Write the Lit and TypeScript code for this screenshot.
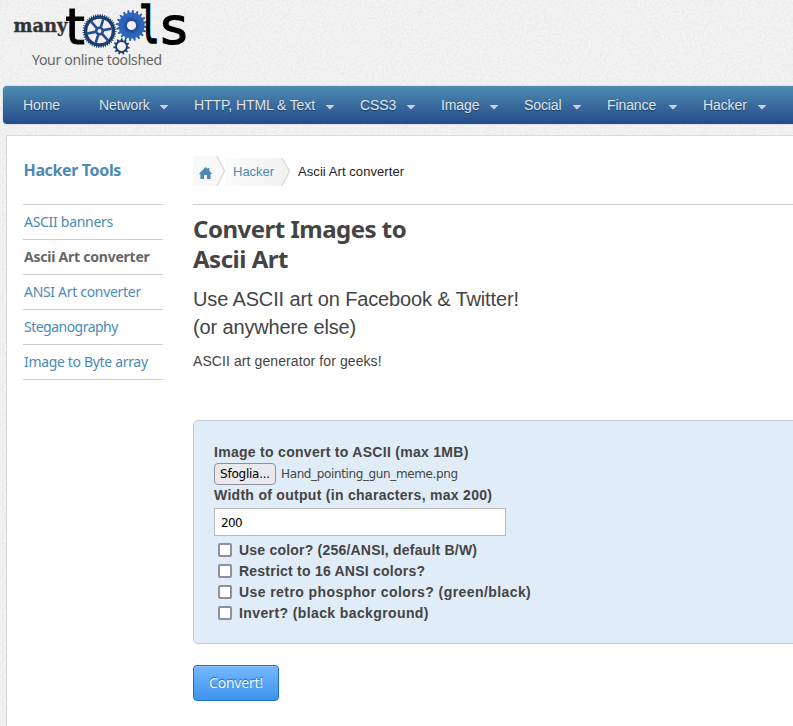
import { LitElement, html, css, svg } from "lit";
import { customElement } from "lit/decorators.js";

const NAV = [
  { label: "Home", width: 76, menu: false },
  { label: "Network", width: 95, menu: true },
  { label: "HTTP, HTML & Text", width: 166, menu: true },
  { label: "CSS3", width: 81, menu: true },
  { label: "Image", width: 83, menu: true },
  { label: "Social", width: 83, menu: true },
  { label: "Finance", width: 96, menu: true },
  { label: "Hacker", width: 89, menu: true },
];

const TOOLS = [
  { label: "ASCII banners", tracking: -0.29 },
  { label: "Ascii Art converter", tracking: -0.23 },
  { label: "ANSI Art converter", tracking: -0.31 },
  { label: "Steganography", tracking: -0.52 },
  { label: "Image to Byte array", tracking: -0.33 },
];

const OPTIONS = [
  { label: "Use color? (256/ANSI, default B/W)", tracking: 0.21 },
  { label: "Restrict to 16 ANSI colors?", tracking: 0.23 },
  { label: "Use retro phosphor colors? (green/black)", tracking: 0.42 },
  { label: "Invert? (black background)", tracking: 0.39 },
];

function gear(cx: number, cy: number, root: number, tip: number, teeth: number): string {
  const pts: string[] = [];
  const step = (Math.PI * 2) / teeth;
  const at = (r: number, a: number) => `${(cx + r * Math.cos(a)).toFixed(2)} ${(cy + r * Math.sin(a)).toFixed(2)}`;
  for (let i = 0; i < teeth; i++) {
    const a = i * step;
    pts.push(at(root, a), at(tip, a + step * 0.15), at(tip, a + step * 0.45), at(root, a + step * 0.6));
  }
  return `M${pts.join("L")}Z`;
}

@customElement("site-logo")
export class SiteLogo extends LitElement {
  static styles = css`
    :host { display: block; height: 86px; }
    svg { display: block; overflow: visible; }
    .big { font-family: "DejaVu Sans", sans-serif; font-size: 50px; fill: #000; stroke: #000; stroke-width: 1; }
    .ell { font-family: "DejaVu Sans Mono", monospace; font-size: 52px; stroke-width: 1.6; }
    .ess { font-size: 52px; stroke-width: 1.2; }
    .many { font-family: "DejaVu Serif", serif; font-weight: bold; font-size: 18px; fill: #333; stroke: #333; stroke-width: 0.4; }
    .tag { font-family: "Noto Sans", sans-serif; font-size: 14px; fill: #666; }
  `;
  render() {
    const spokes = [0, 1, 2, 3, 4, 5].map((i) => {
      const a = (i * 60 - 72) * (Math.PI / 180);
      return svg`<line x1=${99.5 + 3 * Math.cos(a)} y1=${31 + 3 * Math.sin(a)} x2=${99.5 + 12.5 * Math.cos(a)} y2=${31 + 12.5 * Math.sin(a)} stroke="#254f90" stroke-width="2.6"/>`;
    });
    return html`<svg width="200" height="86" viewBox="0 0 200 86">
      <defs>
        <radialGradient id="hub"><stop offset="0.28" stop-color="#1b458f"/><stop offset="0.6" stop-color="#2d65bd"/><stop offset="0.85" stop-color="#2f66b8"/><stop offset="1" stop-color="#234a87"/></radialGradient>
      </defs>
      <text class="many" x="13.5" y="32" textLength="54" lengthAdjust="spacingAndGlyphs">many</text>
      <text class="big" x="65.3" y="43.6">t</text>
      <path d="${gear(99.5, 31, 15.5, 17, 44)} M111.7 31a12.2 12.2 0 1 0-24.4 0a12.2 12.2 0 1 0 24.4 0Z" fill="#1d3d70" fill-rule="evenodd"/>
      ${spokes}
      <circle cx="99.5" cy="31" r="3.3" fill="none" stroke="#254f90" stroke-width="2.6"/>
      <path d=${gear(131.5, 25.5, 13, 15.5, 20)} fill="url(#hub)"/>
      <circle cx="131.5" cy="25.5" r="4.6" fill="#f2f2f2"/>
      <path d="${gear(121.5, 46.5, 6.4, 8.2, 11)} M126 46.5a4.5 4.5 0 1 0-9 0a4.5 4.5 0 1 0 9 0Z" fill="#1f4070" fill-rule="evenodd"/>
      <text class="big ell" x="139" y="43.4" textLength="20.5" lengthAdjust="spacingAndGlyphs">l</text>
      <text class="big ess" x="160.6" y="44">s</text>
      <text class="tag" x="32" y="65" textLength="130">Your online toolshed</text>
    </svg>`;
  }
}

@customElement("app-root")
export class AppRoot extends LitElement {
  static styles = css`
    :host { display: block; position: relative; width: 793px; height: 726px; overflow: hidden; background: #f4f4f4; color: #444; font-family: "Liberation Sans", Arial, sans-serif; font-size: 14px; line-height: 21px; }
    * { box-sizing: border-box; }
    .grain { position: absolute; inset: 0; width: 100%; height: 100%; }
    .page { position: relative; width: 820px; }
    nav { display: flex; height: 38px; margin-left: 3px; border-radius: 4px; padding-left: 20px; background: linear-gradient(#4e8cb2, #254b8a); box-shadow: 0 0 0 1px #dde3e4; color: #e0e5e8; text-shadow: 0 1px 1px #1a3d66; letter-spacing: -0.1px; }
    .item { display: flex; align-items: center; justify-content: space-between; flex: none; padding-right: 25px; white-space: nowrap; }
    .caret { width: 10px; height: 5px; margin: 4px 0 0; background: #cfd0d2; clip-path: polygon(0 0, 100% 0, 50% 100%); }
    .sheet { display: flex; margin: 11px 0 0 6px; height: 600px; border: 1px solid #d9d9d9; background: #fff; padding: 0 0 0 16px; }
    aside { width: 140px; flex: none; font-family: "Noto Sans", sans-serif; }
    h3 { margin: 23px 0 22px; padding-left: 0.5px; font-size: 16px; line-height: 23px; color: #4c89b4; letter-spacing: -0.36px; }
    ul { margin: 0; padding: 0; list-style: none; border-top: 1px solid #ccc; }
    li { height: 35px; border-bottom: 1px solid #ccc; padding-left: 1px; line-height: 34px; color: #4c89b4; white-space: nowrap; }
    .current { color: #666; font-weight: bold; }
    main { margin-left: 30px; width: 660px; flex: none; }
    .crumbs { display: flex; height: 69px; padding-top: 20px; border-bottom: 1px solid #ccc; font-size: 13px; line-height: 31px; color: #222; }
    .trail { display: block; }
    .crumb { color: #4c89b4; margin-left: -65px; width: 41px; }
    .here { margin-left: 24px; letter-spacing: 0.07px; }
    h1 { margin: 9px 0 0; font: bold 24px/30px "Noto Sans", sans-serif; letter-spacing: -0.5px; }
    h2 { margin: 11px 0 0; font-size: 20px; line-height: 28px; font-weight: normal; letter-spacing: -0.14px; }
    p { margin: 10px 0 0; letter-spacing: 0.09px; }
    .panel { margin-top: 48px; height: 224px; border: 1px solid #c6c9cc; border-radius: 5px; background: #e0ecf8; padding: 21px 20px; font-weight: bold; }
    .label { letter-spacing: 0.29px; }
    .file { display: flex; align-items: center; height: 22px; font: 12px/20px "DejaVu Sans", sans-serif; letter-spacing: -0.37px; }
    .browse { width: 62px; height: 22px; margin: -1px 5px 0 0; border: 1px solid #8f8f9d; border-radius: 4px; background: #e9e9ed; color: #000; text-align: center; letter-spacing: -0.25px; }
    .field { width: 292px; height: 28px; margin: 2px 0 4px; border: 1px solid #bbb; background: #fff; color: #000; padding-left: 6px; font: 12px/28px "DejaVu Sans", sans-serif; letter-spacing: -0.6px; }
    .option { display: flex; align-items: flex-start; height: 21px; padding-left: 4px; white-space: nowrap; }
    .box { width: 14px; height: 14px; border: 2px solid #8f8f9d; border-radius: 2px; background: #fff; margin: 3px 7px 0 0; }
    .convert { display: block; margin-top: 21px; width: 86px; height: 36px; border: 1px solid #1f6fc6; border-radius: 4px; background: linear-gradient(#76b8ff, #3e94ec); box-shadow: inset 0 1px 0 #8ac4ff; color: #f3f8ff; font: 14px/34px "Noto Sans", sans-serif; letter-spacing: -0.2px; text-align: center; text-shadow: 0 -1px 1px #1a5da8; padding: 0; }
  `;

  render() {
    return html`
      <svg class="grain">
        <filter id="n" x="0" y="0" width="100%" height="100%" color-interpolation-filters="sRGB">
          <feTurbulence type="fractalNoise" baseFrequency="0.45" numOctaves="2"/>
          <feColorMatrix values="0 0 0 0 0.86  0 0 0 0 0.86  0 0 0 0 0.86  0.8 0 0 0 -0.25"/>
        </filter>
        <rect width="100%" height="100%" filter="url(#n)"/>
      </svg>
      <div class="page">
        <site-logo></site-logo>
        <nav>
          ${NAV.map((n) => html`<div class="item" style="width:${n.width}px"><span>${n.label}</span>${n.menu ? html`<i class="caret"></i>` : ""}</div>`)}
        </nav>
        <div class="sheet">
          <aside>
            <h3>Hacker Tools</h3>
            <ul>${TOOLS.map((t, i) => html`<li class=${i === 1 ? "current" : ""} style="letter-spacing:${t.tracking}px">${t.label}</li>`)}</ul>
          </aside>
          <main>
            <div class="crumbs">
              <svg class="trail" width="105" height="30" viewBox="0 0 105 30">
                <defs><linearGradient id="c"><stop stop-color="#fbfbfb"/><stop offset="1" stop-color="#f1f1f1"/></linearGradient></defs>
                <path d="M0 0H24L32 15L24 30H0Z" fill="#f8f8f8"/>
                <path d="M32 2H89L97 15L89 30H32Z" fill="url(#c)"/>
                <path d="M24 0L31.5 15L24 30M89 2L96.5 15L89 30" fill="none" stroke="#d8d8d8" stroke-width="1.3"/>
                <path d="M12.5 11L14.6 13V12H16.4V14.8L19.3 18H17.6V23H14V19H11V23H7.4V18H5.8Z" fill="#4c89b4"/>
              </svg>
              <span class="crumb">Hacker</span><span class="here">Ascii Art converter</span>
            </div>
            <h1>Convert Images to<br>Ascii Art</h1>
            <h2>Use ASCII art on Facebook &amp; Twitter!<br>(or anywhere else)</h2>
            <p>ASCII art generator for geeks!</p>
            <div class="panel">
              <div class="label">Image to convert to ASCII (max 1MB)</div>
              <div class="file"><span class="browse">Sfoglia...</span><span>Hand_pointing_gun_meme.png</span></div>
              <div class="label">Width of output (in characters, max 200)</div>
              <div class="field">200</div>
              ${OPTIONS.map((o) => html`<div class="option"><span class="box"></span><span style="letter-spacing:${o.tracking}px">${o.label}</span></div>`)}
            </div>
            <button class="convert">Convert!</button>
          </main>
        </div>
      </div>
    `;
  }
}
